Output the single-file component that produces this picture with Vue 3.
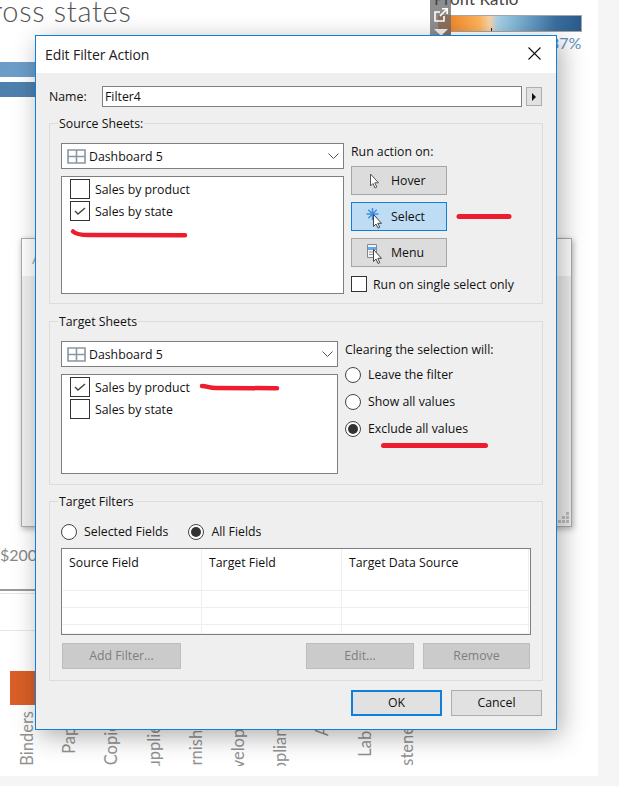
<script setup>
const axis = [
  { t: 'Binders', s: 0 }, { t: 'Paper', s: -5 }, { t: 'Copiers', s: 0 }, { t: 'Supplies', s: 10 },
  { t: 'Furnishings', s: 4 }, { t: 'Envelopes', s: 12 }, { t: 'Appliances', s: 5 }, { t: 'Art', s: -13 },
  { t: 'Labels', s: -4 }, { t: 'Fasteners', s: 10 }
]
const rows = [0,1,2]
const cols = [0,1,2,3]
</script>

<template>
  <div class="page">
    <div class="sheet">
      <div class="title">across states</div>
      <div class="bar bar-a"></div>
      <div class="bar bar-b"></div>
      <div class="legend-handle">
        <svg class="pop" width="16" height="16" viewBox="0 0 16 16" fill="none" stroke="#fff" stroke-width="1.600">
          <path d="M11 9v5H2V5h5M7 9l7-7M9 1.800h5.200V7"/>
        </svg>
        <span class="tri"></span>
      </div>
      <div class="legend-title">Profit Ratio</div>
      <div class="ramp"><i></i></div>
      <div class="legend-val">-37%</div>
      <div class="money">$200</div>
      <div class="rule rule-a"></div>
      <div class="rule rule-b"></div>
      <div class="rule rule-c"></div>
      <div class="orange"></div>
      <div class="axis">
        <div v-for="a in axis" :key="a.t" class="tick"><span :style="{ marginTop: a.s * 2 + 'px' }">{{ a.t }}</span></div>
      </div>
    </div>

    <div class="back-win">
      <div class="back-head">A</div>
      <div class="back-body">
        <svg class="grip" width="12" height="12" viewBox="0 0 12 12" fill="#bdbdbd">
          <rect x="8" y="0" width="3" height="3"/><rect x="4" y="4" width="3" height="3"/><rect x="8" y="4" width="3" height="3"/>
          <rect x="0" y="8" width="3" height="3"/><rect x="4" y="8" width="3" height="3"/><rect x="8" y="8" width="3" height="3"/>
        </svg>
      </div>
    </div>

    <div class="dialog">
      <div class="head">
        <span class="head-title">Edit Filter Action</span>
        <svg class="close" width="13" height="13" viewBox="0 0 13 13" stroke="#111" stroke-width="1.100"><path d="M.5.5l12 12M12.500.5l-12 12"/></svg>
      </div>

      <div class="body">
        <div class="name-row">
          <span class="name-label">Name:</span>
          <div class="name-input">Filter4</div>
          <div class="name-btn"><span></span></div>
        </div>

        <section class="group g1">
          <span class="legend">Source Sheets:</span>
          <div class="cols">
            <div class="left">
              <div class="combo">
                <svg class="grid-ic" width="19" height="15" viewBox="0 0 19 15" fill="none" stroke="#8996a3" stroke-width="1.600"><path d="M1 1h17v13H1zM1 7.500h17M9.500 1v13"/></svg>
                <span>Dashboard 5</span>
                <svg class="chev" width="11" height="6" viewBox="0 0 11 6" fill="none" stroke="#555"><path d="M.5.5l5 5 5-5"/></svg>
              </div>
              <div class="list l1">
                <div class="item"><span class="check"></span>Sales by product</div>
                <div class="item">
                  <span class="check">
                    <svg width="18" height="18" viewBox="0 0 18 18" fill="none" stroke="#444" stroke-width="1.400"><path d="M4 9l3 3 7-6"/></svg>
                  </span>Sales by state
                </div>
              </div>
            </div>
            <div class="right r1">
              <div class="right-label">Run action on:</div>
              <div class="act">
                <svg class="act-ic" width="22" height="24" viewBox="0 0 22 24"><path d="M6.500 5v12l2.500-2.500 2 4.500 1.800-.9-2-4.300h3.700z" fill="#fff" stroke="#555"/></svg>
                Hover
              </div>
              <div class="act on">
                <svg class="act-ic" width="22" height="24" viewBox="0 0 22 24">
                  <path d="M8.500 3v12M2.500 9h12M4.300 4.800l8.400 8.400M12.700 4.800l-8.400 8.400" stroke="#3f8fe0" stroke-width="1.500"/>
                  <path d="M9.500 9.500v12l2.500-2.500 2 4.100 1.800-.9-2-3.900h3.700z" fill="#fff" stroke="#444"/>
                </svg>
                Select
              </div>
              <div class="act">
                <svg class="act-ic" width="22" height="24" viewBox="0 0 22 24">
                  <path d="M3.500 3.500h9v13h-9z" fill="#f4f4f4" stroke="#7d8a96"/>
                  <path d="M4 6h8v3H4z" fill="#62a8ea"/>
                  <path d="M5 11h6M5 13.500h6" stroke="#8a97a3"/>
                  <path d="M9.500 8.500v12l2.500-2.500 2 4.500 1.800-.9-2-4.300h3.700z" fill="#fff" stroke="#444"/>
                </svg>
                Menu
              </div>
              <label class="single"><span class="box"></span>Run on single select only</label>
            </div>
          </div>
        </section>

        <section class="group g2">
          <span class="legend">Target Sheets</span>
          <div class="cols">
            <div class="left narrow">
              <div class="combo">
                <svg class="grid-ic" width="19" height="15" viewBox="0 0 19 15" fill="none" stroke="#8996a3" stroke-width="1.600"><path d="M1 1h17v13H1zM1 7.500h17M9.500 1v13"/></svg>
                <span>Dashboard 5</span>
                <svg class="chev" width="11" height="6" viewBox="0 0 11 6" fill="none" stroke="#555"><path d="M.5.5l5 5 5-5"/></svg>
              </div>
              <div class="list l2">
                <div class="item">
                  <span class="check">
                    <svg width="18" height="18" viewBox="0 0 18 18" fill="none" stroke="#444" stroke-width="1.400"><path d="M4 9l3 3 7-6"/></svg>
                  </span>Sales by product
                </div>
                <div class="item"><span class="check"></span>Sales by state</div>
              </div>
            </div>
            <div class="right r1">
              <div class="right-label clear">Clearing the selection will:</div>
              <div class="radio-row"><span class="radio"></span>Leave the filter</div>
              <div class="radio-row"><span class="radio"></span>Show all values</div>
              <div class="radio-row"><span class="radio sel"></span>Exclude all values</div>
            </div>
          </div>
        </section>

        <section class="group g3">
          <span class="legend">Target Filters</span>
          <div class="fields">
            <div class="radio-row"><span class="radio"></span>Selected Fields</div>
            <div class="radio-row"><span class="radio sel"></span>All Fields</div>
          </div>
          <div class="table">
            <div class="th">Source Field</div>
            <div class="th">Target Field</div>
            <div class="th">Target Data Source</div>
            <div class="th edge"></div>
            <template v-for="r in rows" :key="r">
              <div v-for="c in cols" :key="c" class="td" :class="{ edge: c === 3 }"></div>
            </template>
          </div>
          <div class="tbl-btns">
            <div class="off add">Add Filter...</div>
            <div class="off edit">Edit...</div>
            <div class="off rem">Remove</div>
          </div>
        </section>

        <div class="foot">
          <div class="btn primary">OK</div>
          <div class="btn">Cancel</div>
        </div>
      </div>
    </div>

    <svg class="marks" width="619" height="786" viewBox="0 0 619 786" fill="none" stroke="#ed1c2e" stroke-linecap="round">
      <path d="M73 231.500c3 3 8 3.500 16 3.500l96 .2" stroke-width="4.500"/>
      <path d="M459 216.500h50" stroke-width="5"/>
      <path d="M202 386c5 0 7 2 14 2l61 .2" stroke-width="4.500"/>
      <path d="M383.500 445.500h102" stroke-width="5"/>
    </svg>
  </div>
</template>

<style>
html, body { margin: 0; background: #fff; }
</style>

<style scoped>
.page {
  position: relative;
  width: 619px;
  height: 786px;
  overflow: hidden;
  background: #f5f5f5;
  font-family: "Open Sans", "Liberation Sans", sans-serif;
  font-size: 12.3px;
  color: #111;
}
.sheet {
  position: absolute;
  left: 0;
  top: 0;
  width: 598px;
  height: 776px;
  background: #fff;
  overflow: hidden;
}
.title {
  position: absolute;
  left: -37px;
  top: -6px;
  font: 300 29px/34px Lato, sans-serif;
  letter-spacing: .7px;
  color: #555;
  white-space: nowrap;
}
.bar { position: absolute; left: 0; width: 40px; height: 15px; }
.bar-a { top: 62px; background: #6c9dc9; }
.bar-b { top: 82px; background: #4f80ad; }
.legend-title {
  position: absolute;
  left: 434px;
  top: -11px;
  font: 400 17px/20px Lato, sans-serif;
  color: #444;
  white-space: nowrap;
}
.legend-handle {
  position: absolute;
  left: 430px;
  top: 0;
  width: 21px;
  height: 36px;
  background: linear-gradient(#8c6f5d, #8c6f5d) 8px 15px / 13px 21px no-repeat, #8e8e8e;
}
.pop { position: absolute; left: 3px; top: 7px; }
.tri {
  position: absolute;
  left: 4px;
  top: 29px;
  border: 7px solid transparent;
  border-top-color: #eee;
  border-bottom: 0;
}
.ramp {
  position: absolute;
  left: 451px;
  top: 15px;
  width: 130px;
  height: 15px;
  border: 1px solid #a5a5a5;
  border-left: 0;
  background: linear-gradient(to right, #ef8a2d 0%, #fdb35c 22%, #f6d3a9 30%, #a6d0e4 36%, #8dbfdc 45%, #5f93bd 65%, #3b6f9e 80%, #2a5a8c 100%);
}
.ramp i { position: absolute; left: 40px; top: 12px; width: 1px; height: 3px; background: #222; }
.legend-val {
  position: absolute;
  left: 544px;
  top: 33px;
  font: 400 16px/20px Lato, sans-serif;
  color: #5e8fbd;
  white-space: nowrap;
}
.money {
  position: absolute;
  left: 0;
  top: 545px;
  font: 400 16px/20px Lato, sans-serif;
  color: #888;
}
.rule { position: absolute; left: 0; width: 40px; }
.rule-a { top: 589px; height: 2px; background: #999; }
.rule-b { top: 593px; height: 1px; background: #e8e8e8; }
.rule-c { top: 630px; height: 1px; background: #e8e8e8; }
.orange {
  position: absolute;
  left: 10px;
  top: 671px;
  width: 30px;
  height: 34px;
  background: #d95f26;
}
.axis {
  position: absolute;
  left: 6px;
  top: 700px;
  height: 66px;
  display: grid;
  grid-template-columns: repeat(10, 42.2px);
  overflow: hidden;
}
.tick {
  display: flex;
  align-items: center;
  justify-content: center;
  height: 76px;
}
.tick span {
  writing-mode: vertical-rl;
  transform: rotate(180deg);
  font: 400 16.500px/20px Lato, sans-serif;
  color: #919191;
  white-space: nowrap;
}

.back-win {
  position: absolute;
  left: 21px;
  top: 238px;
  width: 549px;
  height: 287px;
  border: 1px solid #ababab;
  display: flex;
  flex-direction: column;
  box-shadow: 1px 2px 6px rgba(0,0,0,.3);
}
.back-head {
  height: 37px;
  flex: none;
  background: #fff;
  color: #b0a79c;
  font-size: 15px;
  line-height: 38px;
  padding-left: 10px;
}
.back-body { flex: 1; position: relative; background: #efefef; }
.grip { position: absolute; right: 1px; bottom: 2px; }

.dialog {
  position: absolute;
  left: 35px;
  top: 35px;
  width: 520px;
  height: 693px;
  border: 1px solid #0f7fdc;
  background: #efefef;
  box-shadow: 4px 6px 24px rgba(0,0,0,.32);
  display: flex;
  flex-direction: column;
}
.head {
  height: 37px;
  flex: none;
  background: #fff;
  display: flex;
  align-items: center;
  justify-content: space-between;
  padding: 0 15px 0 9px;
}
.head-title { font-size: 14px; letter-spacing: -.1px; color: #222; }
.close { margin-bottom: 3px; }
.body { flex: 1; padding: 13px 14px 0 13px; }

.name-row { display: flex; align-items: center; height: 21px; }
.name-label { width: 53px; }
.name-input {
  width: 416px;
  height: 19px;
  line-height: 19px;
  border: 1px solid #7f7f7f;
  background: #fff;
  padding-left: 2px;
}
.name-btn {
  margin-left: 4px;
  width: 14px;
  height: 17px;
  border: 1px solid #adadad;
  background: #e1e1e1;
  display: flex;
  align-items: center;
  justify-content: center;
}
.name-btn span {
  border: 4px solid transparent;
  border-left: 4px solid #111;
  border-right: 0;
}

.group {
  position: relative;
  width: 494px;
  border: 1px solid #dcdcdc;
  padding: 19px 11px 0;
  box-sizing: border-box;
}
.g1 { margin-top: 16px; height: 181px; }
.g2 { margin-top: 17px; height: 164px; }
.g3 { margin-top: 16px; height: 180px; }
.legend {
  position: absolute;
  left: 8px;
  top: -9px;
  line-height: 17px;
  padding: 0 1px;
  background: #efefef;
}
.cols { display: flex; }
.left { width: 283px; flex: none; }
.left.narrow { width: 277px; }
.combo {
  height: 24px;
  border: 1px solid #7f7f7f;
  background: #fff;
  display: flex;
  align-items: center;
  padding: 0 5px;
  gap: 3px;
}
.grid-ic { flex: none; }
.chev { margin-left: auto; margin-right: -1px; }
.list {
  margin-top: 7px;
  border: 1px solid #7f7f7f;
  background: #fff;
  padding: 2px 0 0 8px;
  box-sizing: border-box;
}
.l1 { height: 118px; }
.l2 { height: 100px; }
.item { display: flex; align-items: center; height: 20px; margin-bottom: 2px; gap: 5px; }
.check {
  width: 18px;
  height: 18px;
  flex: none;
  border: 1px solid #333;
  background: #fff;
  display: block;
}
.check svg { display: block; }
.right { flex: 1; }
.r1 { padding-left: 7px; }
.right-label { height: 23px; line-height: 18px; }
.clear { height: 20px; line-height: 17px; }
.act {
  position: relative;
  width: 55px;
  height: 27px;
  border: 1px solid #a6a6a6;
  background: #dcdcdc;
  margin-bottom: 7px;
  line-height: 27px;
  padding-left: 39px;
}
.act.on { background: #bfdcf5; border-color: #0f7fdc; }
.act-ic { position: absolute; left: 12px; top: 2px; }
.single { display: flex; align-items: center; gap: 6px; margin-top: 9px; height: 16px; }
.box { width: 14px; height: 14px; border: 1px solid #333; background: #fff; flex: none; }
.radio-row { display: flex; align-items: center; height: 27px; gap: 7px; white-space: nowrap; }
.radio {
  width: 14px;
  height: 14px;
  flex: none;
  border: 1px solid #444;
  border-radius: 50%;
  background: #fff;
  position: relative;
}
.radio.sel::after {
  content: "";
  position: absolute;
  left: 2px;
  top: 2px;
  width: 10px;
  height: 10px;
  border-radius: 50%;
  background: #333;
}
.fields {
  display: flex;
  gap: 20px;
  height: 21px;
  margin-bottom: 6px;
  align-items: center;
}
.table {
  width: 468px;
  height: 85px;
  border: 1px solid #7e7e88;
  background: #fff;
  display: grid;
  grid-template-columns: 140px 140px 187px 1fr;
  grid-template-rows: 42px 17px 17px 9px;
  overflow: hidden;
}
.th, .td { border-right: 1px solid #efefef; }
.th { padding: 5px 0 0 7px; border-bottom: 1px solid #efefef; box-sizing: border-box; }
.td { border-bottom: 1px solid #efefef; box-sizing: border-box; }
.edge { border-right: 0; }
.tbl-btns { display: flex; margin-top: 8px; padding-left: 1px; }
.off {
  height: 24px;
  border: 1px solid #bdbdbd;
  background: #cbcbcb;
  color: #7e7e7e;
  text-align: center;
  line-height: 24px;
}
.add { width: 117px; }
.edit { width: 106px; margin-left: 125px; }
.rem { width: 105px; margin-left: 9px; }
.foot { display: flex; justify-content: flex-end; gap: 9px; margin-top: 9px; width: 493px; }
.btn {
  width: 89px;
  height: 24px;
  line-height: 24px;
  text-align: center;
  border: 1px solid #adadad;
  background: #e1e1e1;
}
.primary { border: 2px solid #0f7fdc; width: 87px; height: 22px; line-height: 22px; }
.marks { position: absolute; left: 0; top: 0; pointer-events: none; }
</style>
